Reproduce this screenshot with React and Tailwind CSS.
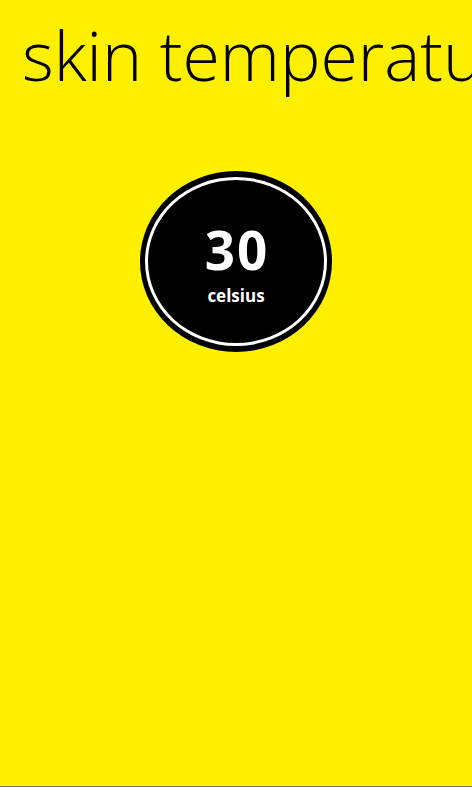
export default function App() {
  return (
    <div className="h-[787px] w-full overflow-hidden bg-[#fff000] border-b border-[#85803a] flex flex-col" style={{ fontFamily: '"Open Sans", "Liberation Sans", sans-serif' }}>
      {/* titulo */}
      <div className="pl-[22px] pt-[8px] whitespace-nowrap overflow-hidden">
        <h1 className="text-[68px] font-light leading-[94px] text-black">skin temperature</h1>
      </div>

      {/* medidor */}
      <div className="flex justify-center pt-[69px]">
        <div className="relative w-[192px] h-[181px] rounded-[50%] bg-black">
          <div className="absolute inset-x-[5px] inset-y-[6px] rounded-[50%] border-[3px] border-white" />
          <div className="absolute inset-0 flex flex-col items-center pt-[49px] text-white">
            <span className="text-[53px] font-bold leading-[60px] tracking-[2px] pl-[2px]">30</span>
            <span className="text-[17px] font-bold leading-[24px] mt-[4px]">celsius</span>
          </div>
        </div>
      </div>
    </div>
  );
}
